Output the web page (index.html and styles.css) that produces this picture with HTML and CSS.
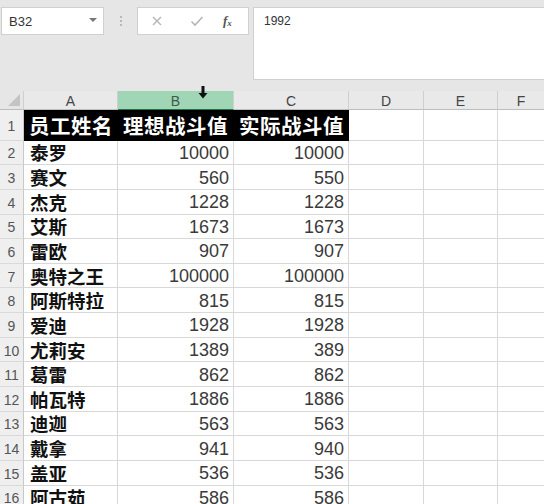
FILE: index.html
```html
<!DOCTYPE html>
<html lang="zh">
<head>
<meta charset="utf-8">
<link rel="stylesheet" href="styles.css">
</head>
<body>
<div class="toolbar">
  <div class="namebox"><span class="ref">B32</span><span class="caret"></span></div>
  <div class="dots"><i></i><i></i><i></i></div>
  <div class="fnbox">
    <svg class="ico" width="12" height="12" viewBox="0 0 12 12"><path d="M2 2 L10 10 M10 2 L2 10" stroke="#b5b5b5" stroke-width="1.4" fill="none"/></svg>
    <svg class="ico" width="14" height="12" viewBox="0 0 14 12"><path d="M1.5 6.5 L5 10 L12.5 2" stroke="#b5b5b5" stroke-width="1.6" fill="none"/></svg>
    <span class="fx">f<sub>x</sub></span>
  </div>
  <div class="formula">1992</div>
</div>
<div class="sheet">
  <div class="corner"><svg width="14" height="14" viewBox="0 0 14 14"><path d="M13 1 L13 13 L1 13 Z" fill="#c4c4c4"/></svg></div>
  <div class="ch">A</div>
  <div class="ch sel">B<svg class="cursor" width="10" height="13" viewBox="0 0 10 13"><path d="M3.5 0 H6.5 V7 H9.5 L5 12.5 L0.5 7 H3.5 Z" fill="#111"/></svg></div>
  <div class="ch">C</div>
  <div class="ch">D</div>
  <div class="ch">E</div>
  <div class="ch last">F</div>

  <div class="rh r1">1</div>
  <div class="c hd">员工姓名</div><div class="c hd">理想战斗值</div><div class="c hd">实际战斗值</div><div class="c"></div><div class="c"></div><div class="c last"></div>

  <div class="rh">2</div><div class="c nm">泰罗</div><div class="c num">10000</div><div class="c num">10000</div><div class="c"></div><div class="c"></div><div class="c last"></div>
  <div class="rh">3</div><div class="c nm">赛文</div><div class="c num">560</div><div class="c num">550</div><div class="c"></div><div class="c"></div><div class="c last"></div>
  <div class="rh">4</div><div class="c nm">杰克</div><div class="c num">1228</div><div class="c num">1228</div><div class="c"></div><div class="c"></div><div class="c last"></div>
  <div class="rh">5</div><div class="c nm">艾斯</div><div class="c num">1673</div><div class="c num">1673</div><div class="c"></div><div class="c"></div><div class="c last"></div>
  <div class="rh">6</div><div class="c nm">雷欧</div><div class="c num">907</div><div class="c num">907</div><div class="c"></div><div class="c"></div><div class="c last"></div>
  <div class="rh">7</div><div class="c nm">奥特之王</div><div class="c num">100000</div><div class="c num">100000</div><div class="c"></div><div class="c"></div><div class="c last"></div>
  <div class="rh">8</div><div class="c nm">阿斯特拉</div><div class="c num">815</div><div class="c num">815</div><div class="c"></div><div class="c"></div><div class="c last"></div>
  <div class="rh">9</div><div class="c nm">爱迪</div><div class="c num">1928</div><div class="c num">1928</div><div class="c"></div><div class="c"></div><div class="c last"></div>
  <div class="rh">10</div><div class="c nm">尤莉安</div><div class="c num">1389</div><div class="c num">389</div><div class="c"></div><div class="c"></div><div class="c last"></div>
  <div class="rh">11</div><div class="c nm">葛雷</div><div class="c num">862</div><div class="c num">862</div><div class="c"></div><div class="c"></div><div class="c last"></div>
  <div class="rh">12</div><div class="c nm">帕瓦特</div><div class="c num">1886</div><div class="c num">1886</div><div class="c"></div><div class="c"></div><div class="c last"></div>
  <div class="rh">13</div><div class="c nm">迪迦</div><div class="c num">563</div><div class="c num">563</div><div class="c"></div><div class="c"></div><div class="c last"></div>
  <div class="rh">14</div><div class="c nm">戴拿</div><div class="c num">941</div><div class="c num">940</div><div class="c"></div><div class="c"></div><div class="c last"></div>
  <div class="rh">15</div><div class="c nm">盖亚</div><div class="c num">536</div><div class="c num">536</div><div class="c"></div><div class="c"></div><div class="c last"></div>
  <div class="rh">16</div><div class="c nm">阿古茹</div><div class="c num">586</div><div class="c num">586</div><div class="c"></div><div class="c"></div><div class="c last"></div>
</div>
</body>
</html>
```
FILE: styles.css
```css
html, body {
  margin: 0;
  padding: 0;
}
body {
  width: 544px;
  height: 504px;
  overflow: hidden;
  background: #e6e6e6;
  font-family: "Liberation Sans", "Noto Sans CJK SC", sans-serif;
}
.toolbar {
  display: flex;
  align-items: flex-start;
  height: 91px;
  padding-top: 7px;
  box-sizing: border-box;
}
.namebox {
  margin-left: 1px;
  width: 103px;
  height: 28px;
  box-sizing: border-box;
  background: #fff;
  border: 1px solid #d0d0d0;
  display: flex;
  align-items: center;
  justify-content: space-between;
  padding: 0 6px 0 7px;
}
.ref {
  font-size: 13px;
  color: #333;
}
.caret {
  width: 0;
  height: 0;
  border-left: 4px solid transparent;
  border-right: 4px solid transparent;
  border-top: 4px solid #777;
  margin-top: -3px;
}
.dots {
  width: 33px;
  height: 28px;
  display: flex;
  flex-direction: column;
  align-items: center;
  justify-content: center;
  gap: 2px;
}
.dots i {
  width: 2px;
  height: 2px;
  background: #b8b8b8;
}
.fnbox {
  width: 112px;
  height: 28px;
  box-sizing: border-box;
  background: #fff;
  border: 1px solid #d0d0d0;
  display: flex;
  align-items: center;
  padding-left: 13px;
  gap: 0;
}
.ico:first-child {
  margin-right: 27px;
}
.ico {
  display: block;
}
.fx {
  margin-left: 19px;
  font-family: "Liberation Serif", serif;
  font-style: italic;
  font-size: 13px;
  color: #555;
  font-weight: bold;
}
.fx sub {
  font-size: 9px;
  vertical-align: -1px;
}
.formula {
  margin-left: 4px;
  flex: 1;
  height: 73px;
  background: #fff;
  border: 1px solid #d0d0d0;
  border-right: none;
  box-sizing: border-box;
  font-size: 12px;
  color: #333;
  padding: 6px 0 0 10px;
}
.sheet {
  display: grid;
  grid-template-columns: 24px 94px 116px 115px 75px 74px 1fr;
  grid-template-rows: 19px 30.6px repeat(15, 24.65px);
  background: #fff;
}
.corner {
  background: #e6e6e6;
  border-right: 1px solid #cfcfcf;
  border-bottom: 1px solid #bdbdbd;
  display: flex;
  align-items: flex-end;
  justify-content: flex-end;
  padding: 0 2px 2px 0;
}
.ch {
  background: #e9e9e9;
  border-right: 1px solid #cfcfcf;
  border-bottom: 1px solid #bdbdbd;
  font-size: 14px;
  color: #444;
  display: flex;
  align-items: center;
  justify-content: center;
  position: relative;
  padding-top: 2px;
}
.ch.sel {
  background: #a0d5b5;
  border-bottom: 1px solid #217346;
  color: #3d5c4a;
}
.ch.last {
  border-right: none;
}
.cursor {
  position: absolute;
  left: 80px;
  top: -5px;
}
.rh {
  background: #efefef;
  border-right: 1px solid #c8c8c8;
  border-bottom: 1px solid #dadada;
  font-size: 14px;
  color: #555;
  display: flex;
  align-items: center;
  justify-content: center;
  padding-top: 2px;
}
.c {
  border-right: 1px solid #d8d8d8;
  border-bottom: 1px solid #d8d8d8;
  display: flex;
  align-items: center;
  min-width: 0;
  white-space: nowrap;
  overflow: hidden;
}
.c.last {
  border-right: none;
}
.c.hd {
  background: #000;
  color: #fff;
  font-family: "Noto Sans CJK SC", sans-serif;
  font-weight: bold;
  font-size: 20.5px;
  padding-left: 5px;
  border-right-color: #000;
  border-bottom-color: #000;
  letter-spacing: 0.5px;
}
.c.nm {
  font-family: "Noto Sans CJK SC", sans-serif;
  font-weight: bold;
  font-size: 18.5px;
  color: #111;
  padding-left: 6px;
}
.c.num {
  justify-content: flex-end;
  padding-right: 4px;
  font-size: 18px;
  color: #3a3a3a;
  padding-top: 2px;
}
```
